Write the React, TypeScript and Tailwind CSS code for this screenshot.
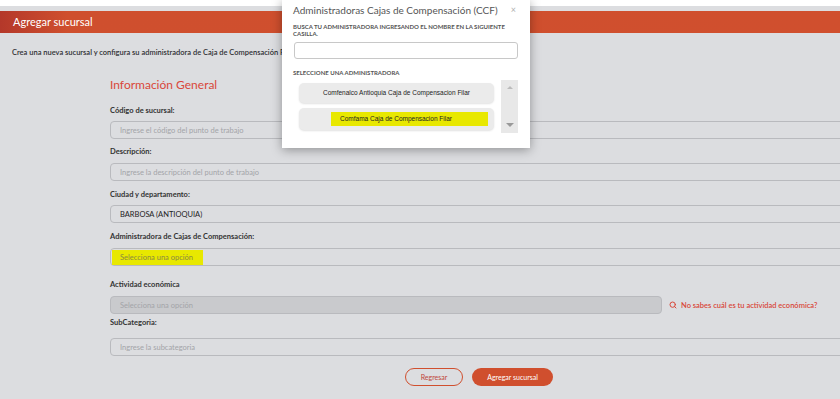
import { Search } from "lucide-react";

const font = { fontFamily: "Lato, 'Open Sans', sans-serif" };

function Field({
  label,
  placeholder,
  value,
  top,
  gap,
  disabled,
  highlight,
  aside,
}: {
  label: string;
  placeholder?: string;
  value?: string;
  top: string;
  gap: string;
  disabled?: boolean;
  highlight?: boolean;
  aside?: boolean;
}) {
  return (
    <div className={top}>
      <div className={`h-[10px] text-[7.5px] font-bold leading-[10px] text-[#333] ${gap}`}>{label}</div>
      <div className="flex items-center">
        <div
          className={`flex h-[18px] shrink-0 items-center rounded-[4px] border border-[#b9babe] pl-[9px] text-[7.5px] ${
            disabled ? "w-[552px] bg-[#c9cacd]" : "w-[780px]"
          } ${value ? "text-[#222]" : "text-[#a3a4a8]"}`}
        >
          {highlight ? (
            <span className="-ml-[8px] bg-[#e8e800] py-[2px] pl-[8px] pr-[10px] text-[#8a8a40]">{placeholder}</span>
          ) : (
            value || placeholder
          )}
        </div>
        {aside && (
          <div className="ml-[7px] flex shrink-0 items-center gap-[4px] text-[7.5px] font-semibold text-[#d9473a]">
            <Search size={8} strokeWidth={3} />
            <span>No sabes cuál es tu actividad económica?</span>
          </div>
        )}
      </div>
    </div>
  );
}

export default function App() {
  return (
    <div className="relative h-[399px] w-[840px] overflow-hidden bg-[#dcdde0]" style={font}>
      <div className="h-[6px] bg-white" />
      <div className="mt-[5px] flex h-[22px] items-center bg-linear-to-r from-[#b4382a] via-[#cf4f2e] via-[8%] to-[#d04f2e] pl-[13px] text-[11px] text-white">
        Agregar sucursal
      </div>

      <p className="mt-[14px] pl-[12px] text-[7.5px] font-semibold text-[#2e2f33]">
        Crea una nueva sucursal y configura su administradora de Caja de Compensación Familiar.
      </p>

      <div className="pl-[110px]">
        <h2 className="mt-[20px] text-[12px] leading-[14px] text-[#d9473a]">Información General</h2>
        <Field label="Código de sucursal:" placeholder="Ingrese el código del punto de trabajo" top="mt-[14px]" gap="mb-[5px]" />
        <Field label="Descripción:" placeholder="Ingrese la descripción del punto de trabajo" top="mt-[8px]" gap="mb-[6px]" />
        <Field label="Ciudad y departamento:" value="BARBOSA (ANTIOQUIA)" top="mt-[9px]" gap="mb-[5px]" />
        <Field label="Administradora de Cajas de Compensación:" placeholder="Selecciona una opción" highlight top="mt-[9px]" gap="mb-[6px]" />
        <Field label="Actividad económica" placeholder="Selecciona una opción" disabled aside top="mt-[14px]" gap="mb-[6px]" />
        <Field label="SubCategoria:" placeholder="Ingrese la subcategoria" top="mt-[4px]" gap="mb-[10px]" />

        <div className="mt-[12px] flex gap-[9px] pl-[295px]">
          <button className="flex h-[18px] w-[58px] items-center justify-center rounded-full border border-[#d04f2e] text-[7px] text-[#c0463a]">
            Regresar
          </button>
          <button className="flex h-[18px] w-[81px] items-center justify-center rounded-full bg-[#d04f2e] text-[7px] text-white">
            Agregar sucursal
          </button>
        </div>
      </div>

      {/* modal */}
      <div className="absolute left-[282px] top-0 h-[148px] w-[248px] bg-white px-[11px] shadow-[0_2px_10px_rgba(0,0,0,0.35)]">
        <div className="flex h-[20px] items-center justify-between">
          <span className="text-[10px] text-[#555]">Administradoras Cajas de Compensación (CCF)</span>
          <span className="mr-[3px] text-[9px] text-[#b0b0b0]">×</span>
        </div>
        <div className="mt-[4px] w-[214px] text-[6px] font-bold uppercase leading-[6.5px] text-[#555]">
          Busca tu administradora ingresando el nombre en la siguiente casilla.
        </div>
        <div className="ml-[1px] mt-[5px] h-[17px] w-[224px] rounded-[3px] border border-[#c8c8c8]" />
        <div className="mt-[9px] text-[6px] font-bold uppercase text-[#555]">Seleccione una administradora</div>
        <div className="mt-[3px] flex">
          <div className="ml-[6px] mt-[3px] flex w-[195px] flex-col gap-[5px]" style={{ fontFamily: "'Liberation Sans', Arial, sans-serif" }}>
            <div className="flex h-[20px] items-center justify-center rounded-[5px] bg-[#ebebeb] text-[6.5px] text-[#222] shadow-[0_1px_2px_rgba(0,0,0,0.12)]">
              Comfenalco Antioquia Caja de Compensacion Filar
            </div>
            <div className="flex h-[22px] items-center rounded-[5px] bg-[#ebebeb] pl-[32px] text-[6.5px] text-[#222] shadow-[0_1px_2px_rgba(0,0,0,0.12)]">
              <span className="w-[157px] bg-[#e8e800] py-[2px] pl-[9px]">Comfama Caja de Compensacion Filar</span>
            </div>
          </div>
          <div className="ml-[7px] flex h-[53px] w-[17px] flex-col items-center justify-between bg-[#e8e8e8] py-[6px]">
            <div className="h-0 w-0 border-x-[3px] border-b-[3px] border-x-transparent border-b-[#bbb]" />
            <div className="h-0 w-0 border-x-[4px] border-t-[4px] border-x-transparent border-t-[#999]" />
          </div>
        </div>
      </div>
    </div>
  );
}
